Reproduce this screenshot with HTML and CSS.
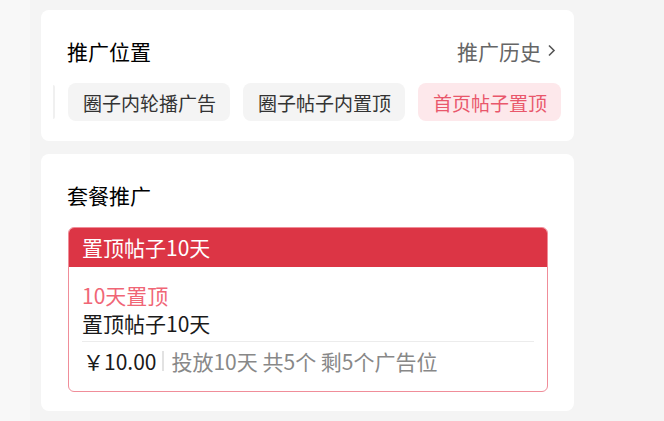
FILE: index.html
```html
<!DOCTYPE html>
<html lang="zh-CN">
<head>
<meta charset="utf-8">
<link rel="stylesheet" href="styles.css">
</head>
<body>
<div class="page">
  <section class="card card-pos">
    <div class="card-head">
      <h2 class="card-title">推广位置</h2>
      <a class="history">推广历史<svg class="chev" width="9" height="13" viewBox="0 0 9 13"><path d="M2 1.5 L7 6.5 L2 11.5" fill="none" stroke="#555" stroke-width="1.6"/></svg></a>
    </div>
    <div class="chips">
      <span class="chip-edge"></span>
      <span class="chip">圈子内轮播广告</span>
      <span class="chip">圈子帖子内置顶</span>
      <span class="chip chip-active">首页帖子置顶</span>
    </div>
  </section>
  <section class="card card-pkg">
    <h2 class="card-title">套餐推广</h2>
    <div class="pkg">
      <div class="pkg-head">置顶帖子10天</div>
      <div class="pkg-body">
        <div class="pkg-tag">10天置顶</div>
        <div class="pkg-name">置顶帖子10天</div>
        <div class="pkg-foot">
          <span class="price">￥10.00</span>
          <span class="sep"></span>
          <span class="desc">投放10天 共5个 剩5个广告位</span>
        </div>
      </div>
    </div>
  </section>
</div>
</body>
</html>
```

FILE: styles.css
```css
* { box-sizing: border-box; }
html, body { margin: 0; padding: 0; }
body {
  background: #f8f8f8;
  font-family: "Noto Sans CJK SC", "Noto Sans", sans-serif;
  color: #222;
  width: 664px;
  height: 421px;
  overflow: hidden;
}
.page {
  margin-left: 30px;
  background: #f4f4f4;
  padding: 10px 90px 10px 11px;
  display: flex;
  flex-direction: column;
  gap: 13px;
  height: 421px;
}
.card {
  background: #fff;
  border-radius: 8px;
}
.card-pos {
  padding: 26px 13px 20px 12px;
}
.card-head {
  display: flex;
  justify-content: space-between;
  align-items: center;
  padding: 0 5px 0 14px;
  height: 29px;
}
.card-title {
  margin: 0;
  font-size: 21px;
  font-weight: 400;
  line-height: 28px;
  color: #000;
}
.history {
  display: flex;
  align-items: center;
  gap: 6px;
  font-size: 21px;
  line-height: 28px;
  color: #666;
}
.chev { display: block; }
.chips {
  display: flex;
  align-items: center;
  gap: 13px;
  margin-top: 18px;
  height: 38px;
}
.chip-edge {
  width: 3px;
  height: 34px;
  background: #f0f0f0;
  border-radius: 0 3px 3px 0;
}
.chip {
  height: 38px;
  padding: 0 14px 0 15px;
  display: flex;
  align-items: center;
  background: #f4f4f4;
  border-radius: 8px;
  font-size: 19px;
  color: #333;
  white-space: nowrap;
}
.chip-active {
  background: #fde8eb;
  color: #e9576b;
}
.card-pkg {
  padding: 27px 26px 19px 26px;
  flex: 1;
}
.pkg {
  margin-top: 18px;
  margin-left: 1px;
  border: 1px solid #f08d99;
  border-radius: 6px;
  overflow: hidden;
}
.pkg-head {
  height: 39px;
  background: #dc3545;
  color: #fff;
  font-size: 21px;
  line-height: 39px;
  padding-left: 13px;
}
.pkg-body {
  padding: 14px 13px 11px 13px;
}
.pkg-tag {
  font-size: 21px;
  line-height: 28px;
  color: #f06676;
}
.pkg-name {
  font-size: 21px;
  line-height: 28px;
  color: #1a1a1a;
  padding-bottom: 4px;
  border-bottom: 1px solid #ececec;
}
.pkg-foot {
  display: flex;
  align-items: center;
  height: 38px;
  padding-left: 1px;
}
.price {
  font-size: 21px;
  color: #1a1a1a;
}
.sep {
  width: 2px;
  height: 20px;
  background: #e2e2e2;
  margin: 0 7px 0 6px;
}
.desc {
  font-size: 21px;
  color: #888;
}
```
